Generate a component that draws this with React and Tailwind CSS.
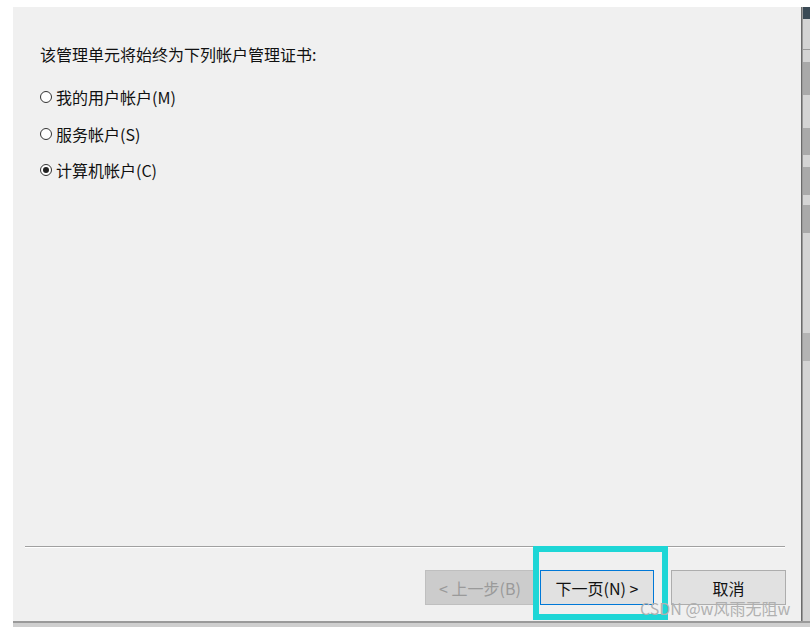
import React from "react";

const font = { fontFamily: '"Noto Sans CJK SC", "Noto Sans", sans-serif' };

function Radio({ checked, label }) {
  return (
    <div className="flex items-center h-[20px]">
      <span className="w-[12px] h-[12px] rounded-full border border-[#333] bg-white flex items-center justify-center">
        {checked && <span className="w-[6px] h-[6px] rounded-full bg-[#222]" />}
      </span>
      <span className="ml-[4px] text-[16px] text-[#111] leading-[20px]">{label}</span>
    </div>
  );
}

export default function App() {
  return (
    <div className="w-[810px] h-[629px] bg-white relative overflow-hidden flex flex-col" style={font}>
      <div className="h-[7px] shrink-0" />
      <div className="flex h-[614px] shrink-0">
        <div className="w-[13px] shrink-0" />
        <div className="w-[789px] shrink-0 bg-[#f0f0f0] border-r border-[#6b6b6b] flex flex-col">
          <div className="flex-1 pl-[27px] pt-[37px]">
            <div className="text-[16px] leading-[20px] text-[#111]">该管理单元将始终为下列帐户管理证书:</div>
            <div className="mt-[23px] flex flex-col gap-[16.5px]">
              <Radio label="我的用户帐户(M)" />
              <Radio label="服务帐户(S)" />
              <Radio checked label="计算机帐户(C)" />
            </div>
          </div>
          <div className="ml-[12px] mr-[16px] h-[2px] border-t border-[#a0a0a0] border-b border-b-white" />
          <div className="flex justify-end pr-[15px] pt-[22px] pb-[16px]">
            <div className="w-[110px] h-[35px] bg-[#cccccc] border border-[#bfbfbf] flex items-center justify-center text-[16px] text-[#9a9a9a]">
              &lt; 上一步(B)
            </div>
            <div className="ml-[5px] w-[114px] h-[35px] bg-[#e1e1e1] border border-[#0078d7] flex items-center justify-center text-[16px] text-[#111]">
              下一页(N) &gt;
            </div>
            <div className="ml-[17px] w-[115px] h-[35px] bg-[#e1e1e1] border border-[#adadad] flex items-center justify-center text-[16px] text-[#111]">
              取消
            </div>
          </div>
        </div>
        <div className="flex-1 bg-[#d4d4d4] border-l border-[#9a9a9a] flex flex-col">
          <div className="h-[12px] bg-[#3a4a55]" />
          <div className="h-[30px]" />
          <div className="h-[1px] bg-[#9a9a9a]" />
          <div className="h-[12px]" />
          <div className="h-[33px] bg-[#a9a9a9]" />
          <div className="h-[33px]" />
          <div className="h-[27px] bg-[#a9a9a9]" />
          <div className="h-[12px]" />
          <div className="h-[28px] bg-[#a9a9a9]" />
          <div className="h-[10px]" />
          <div className="h-[28px] bg-[#a9a9a9]" />
          <div className="h-[100px]" />
          <div className="h-[28px] bg-[#b4b4b4]" />
          <div className="flex-1" />
        </div>
      </div>
      <div className="h-[2px] shrink-0 ml-[13px] bg-[#9a9a9a]" />
      <div className="h-[4px] shrink-0 ml-[13px] bg-[#cfcfcf]" />

      {/* cyan highlight annotation */}
      <div className="absolute left-[533px] top-[546px] w-[135px] h-[74px] border-[6px] border-[#1ed6d6]" />

      {/* watermark */}
      <div className="absolute left-[640px] top-[598px] text-[16px] leading-[20px] text-[#b0b0b0]" style={{ fontFamily: '"Noto Sans CJK SC", "Liberation Sans", sans-serif' }}>
        CSDN @w风雨无阻w
      </div>
    </div>
  );
}
